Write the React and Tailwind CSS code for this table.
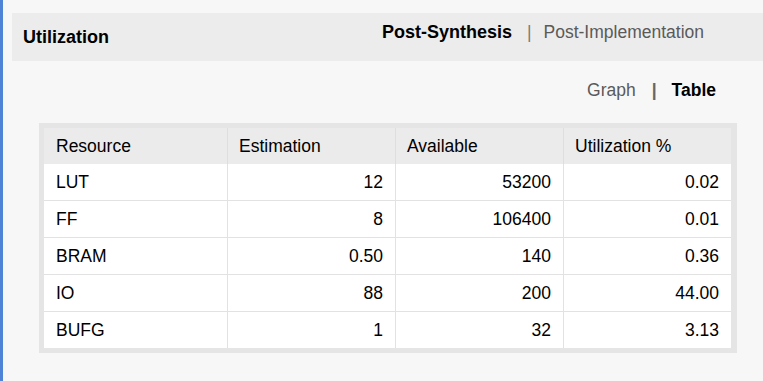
import React from "react";

const rows = [
  ["LUT", "12", "53200", "0.02"],
  ["FF", "8", "106400", "0.01"],
  ["BRAM", "0.50", "140", "0.36"],
  ["IO", "88", "200", "44.00"],
  ["BUFG", "1", "32", "3.13"],
];

export default function App() {
  return (
    <div
      className="w-[763px] h-[381px] bg-[#f7f7f7] border-l-[3px] border-[#4f83d6] text-black overflow-hidden"
      style={{ fontFamily: '"Liberation Sans", Arial, sans-serif' }}
    >
      <div className="ml-[9px] mt-[13px] h-[48px] bg-[#ececec] flex items-start justify-between">
        <div className="pl-[11px] pt-[14px] text-[18px] leading-[20px] font-bold">Utilization</div>
        <div className="pr-[59px] pt-[9px] flex items-start text-[17.5px] leading-[20px]">
          <span className="font-bold text-[18px]">Post-Synthesis</span>
          <span className="ml-[15px] mr-[12px] text-[#7a7a7a]">|</span>
          <span className="text-[#5a5a5a]">Post-Implementation</span>
        </div>
      </div>
      <div className="mt-[19px] pr-[47px] flex justify-end items-start text-[17.5px] leading-[20px]">
        <span className="text-[#5a5a5a]">Graph</span>
        <span className="ml-[16px] mr-[15px] text-[#666] font-bold">|</span>
        <span className="font-bold">Table</span>
      </div>
      <div className="ml-[36px] mt-[23px] w-[698px] bg-[#e5e5e5] p-[5px]">
        <div className="grid grid-cols-[183px_168px_168px_168px] text-[17.5px] leading-[20px]">
          {["Resource", "Estimation", "Available", "Utilization %"].map((h, i) => (
            <div
              key={h}
              className={
                "h-[36px] bg-[#ebebeb] flex items-center " +
                (i === 0 ? "pl-[12px]" : "pl-[11px] border-l border-[#dedede]")
              }
            >
              {h}
            </div>
          ))}
          {rows.map((r, ri) =>
            r.map((c, ci) => (
              <div
                key={ri + "-" + ci}
                className={
                  "bg-white flex items-center " +
                  (ri === 0 ? "h-[36px] " : "h-[37px] border-t border-t-[#e2e2e2] ") +
                  (ci === 0
                    ? "pl-[12px]"
                    : "justify-end pr-[12px] border-l border-l-[#e2e2e2]")
                }
              >
                {c}
              </div>
            ))
          )}
        </div>
      </div>
    </div>
  );
}
